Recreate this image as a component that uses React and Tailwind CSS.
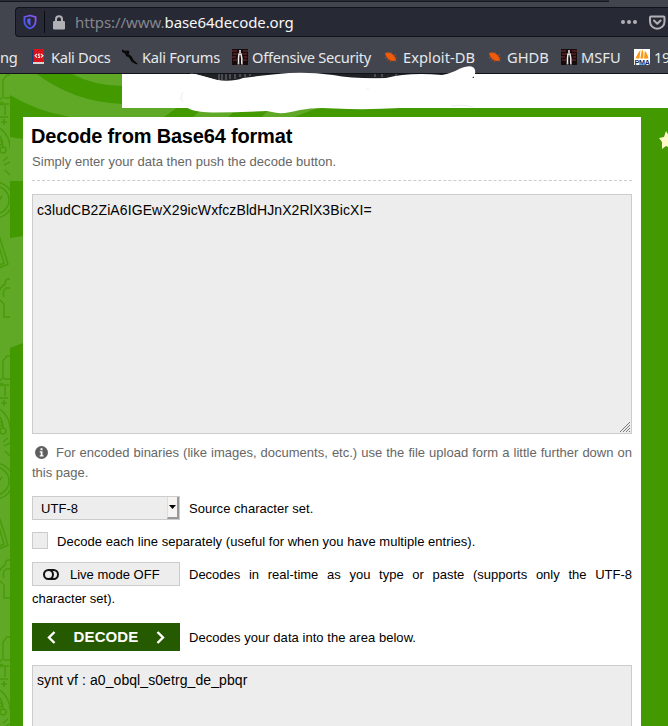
import React from "react";

function ShieldIcon() {
  return (
    <svg className="h-4 w-[14px] shrink-0" viewBox="0 0 14 16" fill="none">
      <defs>
        <linearGradient id="shield" x1="1" y1="0" x2="0" y2="1">
          <stop offset="0" stopColor="#9a55ff" />
          <stop offset="1" stopColor="#3557e8" />
        </linearGradient>
      </defs>
      <path d="M7 1.500 12.600 3V7c0 3.600-2.100 6.200-5.600 7.500C3.500 13.200 1.400 10.600 1.400 7V3Z" stroke="url(#shield)" strokeWidth="1.800" strokeLinejoin="round" />
      <path d="M7.500 4.200v7.600C5.200 10.400 4.200 9 4.200 7V4.900Z" fill="#5a5cf2" />
    </svg>
  );
}

function LockIcon() {
  return (
    <svg className="h-[15px] w-3 shrink-0" viewBox="0 0 12 15">
      <path d="M3 7V4.200a3 3 0 0 1 6 0V7" fill="none" stroke="#b1b1b5" strokeWidth="2" />
      <rect y="6" width="12" height="8.500" rx="1.300" fill="#b1b1b5" />
    </svg>
  );
}

function PocketIcon() {
  return (
    <svg className="h-[15px] w-[17px] shrink-0" viewBox="0 0 17 15" fill="none" stroke="#b1b1b5" strokeWidth="2" strokeLinecap="round" strokeLinejoin="round">
      <path d="M2 1.500h12.500q1 0 1 1v4a7.200 7.200 0 0 1-14.500 0v-4q0-1 1-1Z" />
      <path d="m5 5.500 3.300 3.200 3.300-3.200" />
    </svg>
  );
}

function DocsIcon() {
  return (
    <svg className="size-4" viewBox="0 0 16 16">
      <path d="M0 1h2v14H0z" fill="#173d78" />
      <path d="M1.500 0H12v13H1.500z" fill="#d8131b" />
      <path d="M1 13h11v2H1z" fill="#d9d5d5" />
      <path d="M5 5 3 6.800 5 8.500M9 5l2 1.800-2 1.700M8.200 5.200C6 4.500 6 6.300 7 6.800s1 2.400-1 1.400" fill="none" stroke="#f9e8e8" strokeWidth="1.100" />
    </svg>
  );
}

function DragonIcon() {
  return (
    <svg className="size-4" viewBox="0 0 16 16">
      <path d="m0 .5 3 1.300 3.500-.3 1 2L6.500 5l3 2.200L11.500 11l4.500 4-2 .3-4.500-2.600L7 8.500 4 7 3 4.500 0 3Z" fill="#090909" />
    </svg>
  );
}

function TowerIcon() {
  return (
    <svg className="size-4" viewBox="0 0 16 16">
      <path d="M0 0h16v16H0z" fill="#170b0c" />
      <path d="M0 2h5M1 5h5M0 8h4M1 11h4M11 2h5M10 5h5M12 8h3M11 11h4" stroke="#5b2427" strokeWidth="1.500" />
      <path d="M8 1v3M6.500 15V9l.5-4h2l.8 4v6" fill="none" stroke="#eee" strokeWidth="1.500" />
      <path d="M5.500 15h2M9 15h2" stroke="#aaa" />
    </svg>
  );
}

function BugIcon() {
  return (
    <svg className="size-4" viewBox="0 0 16 16">
      <path d="M2 4.500c2.500-2 7-.5 9.300 2.700 2 2 2.200 4.600-.5 4.800C7 12.300 3.500 9 2 4.500Z" fill="#ed5b0b" />
      <path d="m5 5-1-2m4 2V3m2 4 3-1.500M11 9h3M4 8 2 9m4 1-2 1.500m4-.5-1 2m5-2 1 2" stroke="#c94d15" strokeWidth=".8" />
    </svg>
  );
}

function PmaIcon() {
  return (
    <svg className="size-4" viewBox="0 0 16 16">
      <path d="M0 0h16v16H0z" fill="#fff" />
      <path d="M1.500 9.500C3 6.500 4 3.500 6.500 1L5.500 9.500ZM6.300 9.500 8 .5c2 2 1.500 6 1.200 9ZM10 9.500 10.800 2c2.200 2 3 4.500 3.700 7.500Z" fill="#f79817" />
      <text x="8" y="15.500" textAnchor="middle" fontFamily="Liberation Sans" fontWeight="bold" fontSize="6.500" textLength="15" lengthAdjust="spacingAndGlyphs" fill="#21295c">PMA</text>
    </svg>
  );
}

function Bookmark({ icon, label, className }) {
  return (
    <div className={"flex shrink-0 items-center gap-1 " + className}>
      {icon}
      <span className="whitespace-nowrap">{label}</span>
    </div>
  );
}

function Browser() {
  return (
    <header className="h-[74px] border-b border-[#11131a] bg-[#42454d] font-['Noto_Sans',sans-serif] text-[#e6e8ec]">
      <div className="h-[2px] w-[609px] border-b border-[#14161d] bg-[#292c35]" />
      <div className="mt-[5px] ml-[15px] flex h-[30px] items-center rounded-l-[4px] border border-r-0 border-[#11131a] bg-[#272935] pl-[7px]">
        <ShieldIcon />
        <div className="ml-[7px] h-[22px] w-px bg-[#090b12]" />
        <div className="ml-2"><LockIcon /></div>
        <div className="ml-[10px] w-[546px] whitespace-nowrap text-[15px] tracking-[-0.08px] text-[#85868d]">
          https://www.<span className="text-[#f7f7f8]">base64decode.org</span>
        </div>
        <div className="flex w-[28px] shrink-0 gap-[2px]">
          <i className="size-1 rounded-full bg-[#b1b1b5]" />
          <i className="size-1 rounded-full bg-[#b1b1b5]" />
          <i className="size-1 rounded-full bg-[#b1b1b5]" />
        </div>
        <PocketIcon />
      </div>
      <nav className="mt-2 flex h-6 items-center text-[14.67px]">
        <span className="w-[32px] shrink-0 tracking-[-0.3px]">ng</span>
        <Bookmark className="w-[90px] tracking-[-0.33px] [&>span]:-ml-px" icon={<DocsIcon />} label="Kali Docs" />
        <Bookmark className="w-[110px] tracking-[-0.28px]" icon={<DragonIcon />} label="Kali Forums" />
        <Bookmark className="w-[151px] tracking-[-0.29px]" icon={<TowerIcon />} label="Offensive Security" />
        <Bookmark className="w-[104px] tracking-[0.05px]" icon={<BugIcon />} label="Exploit-DB" />
        <Bookmark className="w-[74px]" icon={<BugIcon />} label="GHDB" />
        <Bookmark className="w-[73px]" icon={<TowerIcon />} label="MSFU" />
        <Bookmark className="w-[80px] tracking-[-0.3px]" icon={<PmaIcon />} label="192.168" />
      </nav>
    </header>
  );
}

function Doodles() {
  return (
    <g fill="none" stroke="#499b0b" strokeWidth="1.500">
      <path d="M-2 31 3 27V10l4-5h4M4 28h7M1 34h8M0 47h8M5 35v10" />
      <path d="m0 32 3 3m0-3-3 3M4 49v6m-3-3h6" />
      <path d="M0 58q10 8 10 20M0 66q3 5 3 12M3 91l5-4m-4 8 6-3m-5 8 5 5" />
      <circle cx="3" cy="80" r="3" />
      <circle cx="0" cy="73" r="2" />
      <circle cx="-5" cy="130" r="18" />
      <circle cx="-5" cy="130" r="14" />
      <path d="m-4 134 6-8M-2 162l10 32-13 6M-4 166l8 27-8 4" />
      <path d="M10 209H8q-3 1-3 5-8 5-6 15l5 5v13h6M10 218H6q-4 3-2 9M4 247h6" />
    </g>
  );
}

function Backdrop() {
  return (
    <svg className="absolute inset-0 h-[652px] w-[668px]" viewBox="0 74 668 652">
      <path d="M0 74h668v652H0z" fill="#429900" />
      <g fill="#60a927">
        <path d="M10 74H37Q74 102 122 104V107H178L164 117H70Q36 111 10 95Z" />
        <path d="M72 74Q92 85 122 86V74Z" />
        <path d="M10 137 23 139V181H10ZM10 238 23 236V343L10 348Z" />
        <path d="M203 108H238L228 117H193ZM270 108H318L294 117H262Z" />
        <path d="M0 74h10v652H0z" />
      </g>
      <svg x="0" y="74" width="10" height="652" viewBox="0 74 10 652">
        <g transform="translate(0 70)"><Doodles /></g>
        <g transform="translate(0 351)"><Doodles /></g>
        <g transform="translate(0 632)"><Doodles /></g>
      </svg>
      <path d="m666 131 3 5 7 1-5 5 1 7-6-3-4 3v-7l-3-4 5-1Z" fill="#fffbc8" />
    </svg>
  );
}

function Scribble() {
  return (
    <svg className="pointer-events-none absolute top-[60px] left-[122px] h-[60px] w-[546px]" viewBox="122 60 546 60">
      <path d="M195 74H474V78H407L225 82Z" fill="#202124" />
      <path d="M219 74v6m3-6v6m4-6v6m4-6v5m5-5v5m5-5v3m5-3v3m5-3v2m125-2v3m7-3v3m14-3v3" stroke="#73787c" strokeWidth="1" />
      <path d="M183 76Q188 73 195 74Q206 77 216 80Q233 82 243 78Q258 76 278 74Q303 71 333 75Q355 79 386 78Q409 72 442 75Q452 73 459 69Q473 63 475 70Q476 76 472 78L668 74V108H400Q366 110 335 108.500Q315 107 300 110Q282 115 272 112L267 111Q240 112 213 112.500Q186 112 183 103L182 97V94Z" fill="#fff" />
      <path d="M183 92q-4 6 0 10M451 106q13-2 22 1M366 89h3" stroke="#ededed" fill="none" />
    </svg>
  );
}

function InfoIcon() {
  return (
    <svg className="mr-2 ml-[3px] inline size-[13px] align-[-2px]" viewBox="0 0 13 13">
      <circle cx="6.500" cy="6.500" r="6.500" fill="#5f5f5f" />
      <path d="M5.500 2.200h2v2h-2zM4.700 5.200h2.800v4h1v1.300H4.700V9.200h1V6.500h-1z" fill="#fff" />
    </svg>
  );
}

function Chevron({ right }) {
  return (
    <svg className="h-[13px] w-[9px]" viewBox="0 0 9 13" fill="none" stroke="#fff" strokeWidth="2.400">
      <path d={right ? "m1.500 1 5.500 5.500L1.500 12" : "M7.500 1 2 6.500 7.500 12"} />
    </svg>
  );
}

function DecodeCard() {
  return (
    <main className="relative mx-[23px] mt-[9px] h-[640px] w-[618px] bg-white px-[9px] pt-[6px] text-[13px] text-black">
      <h1 className="-ml-px h-[26px] text-[20px] leading-[27px] font-bold tracking-[-0.18px]">Decode from Base64 format</h1>
      <p className="h-[32px] border-b border-dashed border-[#ccc] text-[13px] leading-[25px] tracking-[0.04px] text-[#666]">
        Simply enter your data then push the decode button.
      </p>
      <div className="mt-[13px] flex h-[240px] flex-col justify-between border border-[#ccc] bg-[#ededed] pt-[6px] pl-1 text-[14px] leading-[19px] tracking-[0.1px]">
        <span>c3ludCB2ZiA6IGEwX29icWxfczBldHJnX2RlX3BicXI=</span>
        <svg className="size-[11px] self-end" viewBox="0 0 11 11" stroke="#777" strokeWidth="1">
          <path d="M0 10 10 0M3 10l7-7M6 10l4-4M9 10l1-1" />
        </svg>
      </div>
      <p className="mt-[9px] h-[40px] text-justify leading-[20px] text-[#666]">
        <InfoIcon />For encoded binaries (like images, documents, etc.) use the file upload form a little further down on this page.
      </p>
      <div className="mt-[13px] flex h-6 items-center tracking-[0.04px]">
        <div className="flex h-6 w-[148px] items-center justify-between border border-[#ccc] bg-[#ededed] pl-2">
          <span className="pt-[2px]">UTF-8</span>
          <span className="flex h-[22px] w-3 items-center justify-center border-r-2 border-b-2 border-l border-[#999] border-l-[#ddd] bg-[#f5f4f2]">
            <svg className="h-1 w-[7px]" viewBox="0 0 7 4"><path d="M0 0h7L3.500 4Z" /></svg>
          </span>
        </div>
        <span className="ml-[9px] pt-[2px]">Source character set.</span>
      </div>
      <div className="mt-3 flex h-[17px] items-center tracking-[0.04px]">
        <span className="h-[17px] w-4 border border-[#ccc] bg-[#ededed]" />
        <span className="ml-[9px] pt-[2px]">Decode each line separately (useful for when you have multiple entries).</span>
      </div>
      <p className="mt-[14px] h-12 text-justify leading-6">
        <span className="-mt-px mr-[9px] inline-flex h-6 w-[148px] items-center border border-[#ccc] bg-[#ededed] pl-[10px] align-top leading-4">
          <svg className="mr-[11px] h-[11px] w-4" viewBox="0 0 16 11" fill="none" stroke="#111" strokeWidth="2">
            <path d="M5.500 1h5a4.500 4.500 0 0 1 0 9h-5a4.500 4.500 0 0 1 0-9Zm0 0a4.500 4.500 0 0 1 0 9" />
          </svg>
          <span className="whitespace-nowrap pt-[2px]">Live mode OFF</span>
        </span>
        Decodes in real-time as you type or paste (supports only the UTF-8 character set).
      </p>
      <div className="mt-3 flex h-7 items-center tracking-[0.04px]">
        <div className="flex h-7 w-[148px] items-center justify-between bg-[#265a00] px-[15px] text-[15px] font-bold tracking-[0.1px] text-white">
          <Chevron />DECODE<Chevron right />
        </div>
        <span className="ml-[9px] pt-[2px]">Decodes your data into the area below.</span>
      </div>
      <div className="mt-[14px] h-[90px] border border-[#ccc] bg-[#ededed] pt-[5px] pl-1 text-[14px] leading-[19px] tracking-[0.08px]">
        synt vf : a0_obql_s0etrg_de_pbqr
      </div>
    </main>
  );
}

export default function App() {
  return (
    <div className="relative h-[726px] w-[668px] overflow-hidden font-['Liberation_Sans',Arial,sans-serif]">
      <Browser />
      <div className="relative h-[652px]">
        <Backdrop />
        <div className="relative ml-[122px] h-[34px] bg-white" />
        <DecodeCard />
      </div>
      <Scribble />
    </div>
  );
}
